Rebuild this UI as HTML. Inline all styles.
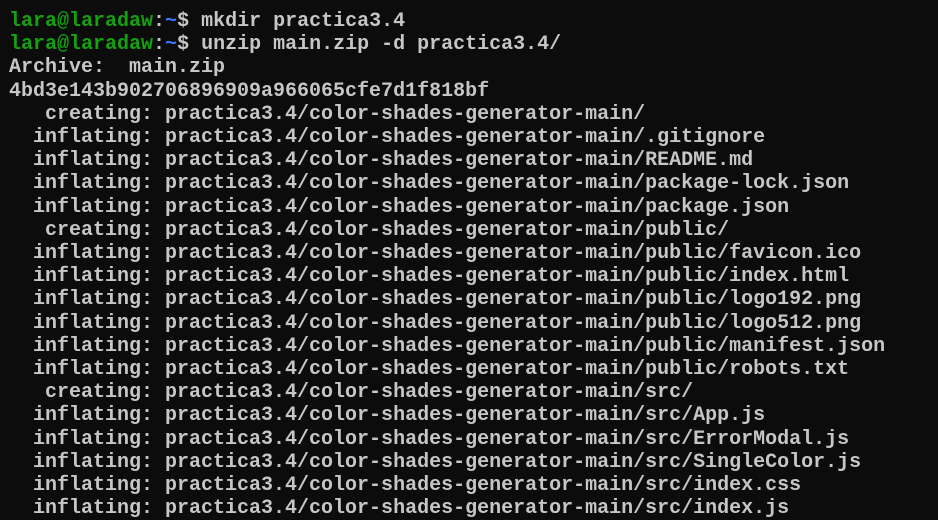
<!DOCTYPE html>
<html><head><meta charset="utf-8"><style>
html,body{margin:0;padding:0;background:#0c0c0c;width:938px;height:517px;overflow:hidden}
pre{margin:0;position:absolute;left:9px;top:10px;font-family:"Liberation Mono","DejaVu Sans Mono",monospace;font-size:20px;line-height:23.2px;color:#c6c6c6;font-weight:bold;letter-spacing:0px}
.g{color:#13a10e}.b{color:#3b78ff}
</style></head><body><pre><span class="g">lara@laradaw</span>:<span class="b">~</span>$ mkdir practica3.4
<span class="g">lara@laradaw</span>:<span class="b">~</span>$ unzip main.zip -d practica3.4/
Archive:  main.zip
4bd3e143b902706896909a966065cfe7d1f818bf
   creating: practica3.4/color-shades-generator-main/
  inflating: practica3.4/color-shades-generator-main/.gitignore
  inflating: practica3.4/color-shades-generator-main/README.md
  inflating: practica3.4/color-shades-generator-main/package-lock.json
  inflating: practica3.4/color-shades-generator-main/package.json
   creating: practica3.4/color-shades-generator-main/public/
  inflating: practica3.4/color-shades-generator-main/public/favicon.ico
  inflating: practica3.4/color-shades-generator-main/public/index.html
  inflating: practica3.4/color-shades-generator-main/public/logo192.png
  inflating: practica3.4/color-shades-generator-main/public/logo512.png
  inflating: practica3.4/color-shades-generator-main/public/manifest.json
  inflating: practica3.4/color-shades-generator-main/public/robots.txt
   creating: practica3.4/color-shades-generator-main/src/
  inflating: practica3.4/color-shades-generator-main/src/App.js
  inflating: practica3.4/color-shades-generator-main/src/ErrorModal.js
  inflating: practica3.4/color-shades-generator-main/src/SingleColor.js
  inflating: practica3.4/color-shades-generator-main/src/index.css
  inflating: practica3.4/color-shades-generator-main/src/index.js</pre></body></html>
